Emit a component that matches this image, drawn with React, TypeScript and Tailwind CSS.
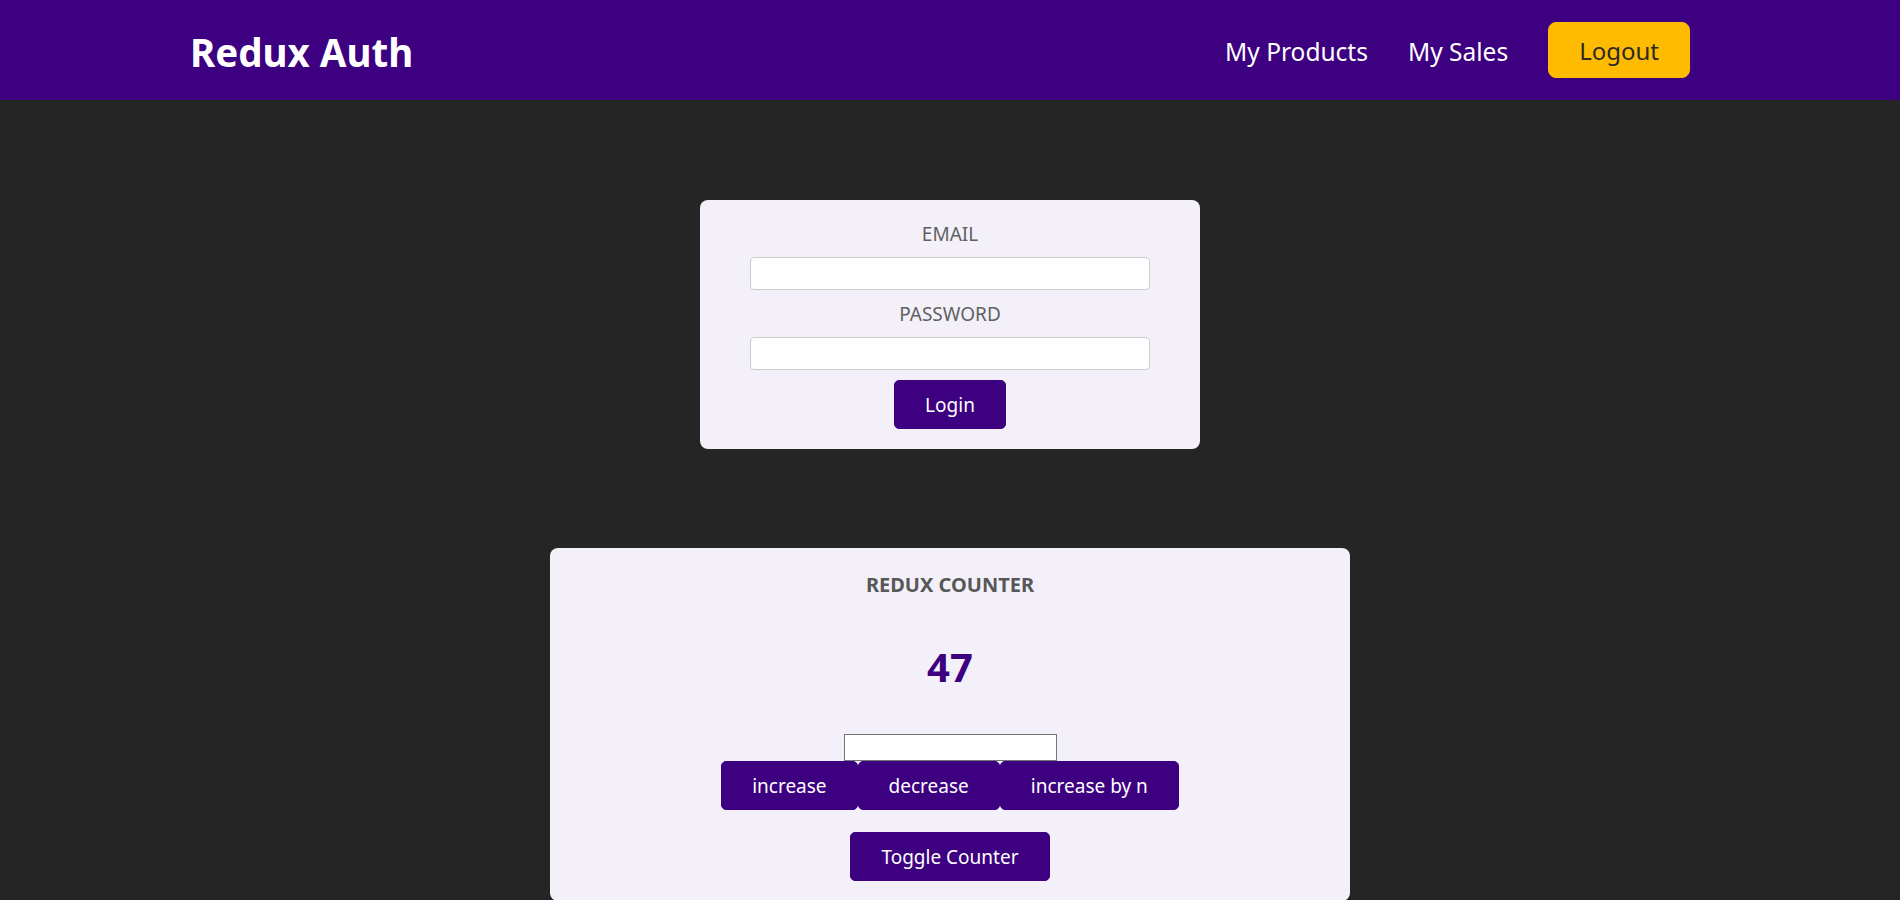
const Header = () => {
  return (
    <header className="flex h-[100px] w-full items-center justify-between bg-[#3c0080] px-[10%]">
      <h1 className="pt-1 text-[38.5px] font-bold leading-none text-white">Redux Auth</h1>
      <nav>
        <ul className="flex items-center">
          <li className="mx-5 pt-1">
            <a href="#" className="text-[24.5px] text-white">My Products</a>
          </li>
          <li className="mx-5 pt-1">
            <a href="#" className="text-[24.5px] text-white">My Sales</a>
          </li>
          <li className="mx-5">
            <button className="rounded-[8px] border border-[#ffbb00] bg-[#ffbb00] px-[30px] pb-[9px] pt-[11px] text-[24px] leading-[34px] text-[#2c2922]">
              Logout
            </button>
          </li>
        </ul>
      </nav>
    </header>
  )
}

const Auth = () => {
  return (
    <main className="mx-auto mt-[100px] w-[500px] rounded-[8px] bg-[#f3f0fa] p-5 text-center">
      <form onSubmit={(e) => e.preventDefault()}>
        <div className="mb-[10px]">
          <label htmlFor="email" className="mb-[10px] block pt-[1px] text-[19px] leading-[26px] text-[#616161]">EMAIL</label>
          <input id="email" type="email" className="mx-auto block h-[33px] w-[400px] rounded-[4px] border border-[#ccc] bg-white px-[5px]" />
        </div>
        <div className="mb-[10px]">
          <label htmlFor="password" className="mb-[10px] block pt-[1px] text-[19px] leading-[26px] text-[#616161]">PASSWORD</label>
          <input id="password" type="password" className="mx-auto block h-[33px] w-[400px] rounded-[4px] border border-[#ccc] bg-white px-[5px]" />
        </div>
        <button className="rounded-[5px] border border-[#3c0080] bg-[#3c0080] px-[30px] pb-[9px] pt-[11px] text-[19px] leading-[27px] text-white">
          Login
        </button>
      </form>
    </main>
  )
}

const btn = "rounded-[5px] border border-[#3c0080] bg-[#3c0080] px-[30px] pb-[10px] pt-[11px] text-[19px] leading-[26px] text-white"

const Counter = () => {
  return (
    <main className="mx-auto mt-[99px] w-[800px] rounded-[8px] bg-[#f3f0fa] p-5 text-center">
      <h1 className="pt-[3px] text-[20px] font-bold leading-[27px] text-[#575757]">REDUX COUNTER</h1>
      <div className="my-[40px] pt-[2px] text-[40px] font-bold leading-[54px] text-[#3c0080]">47</div>
      <input type="number" className="mx-auto block h-[27px] w-[213px] border border-[#767676] bg-white" />
      <div className="flex justify-center">
        <button className={btn}>increase</button>
        <button className={btn}>decrease</button>
        <button className={btn}>increase by n</button>
      </div>
      <button className={`${btn} mt-[22px]`}>Toggle Counter</button>
    </main>
  )
}

export default function App() {
  return (
    <div className="min-h-screen bg-[#252525] font-['Noto_Sans',sans-serif]">
      <Header />
      <Auth />
      <Counter />
    </div>
  )
}
